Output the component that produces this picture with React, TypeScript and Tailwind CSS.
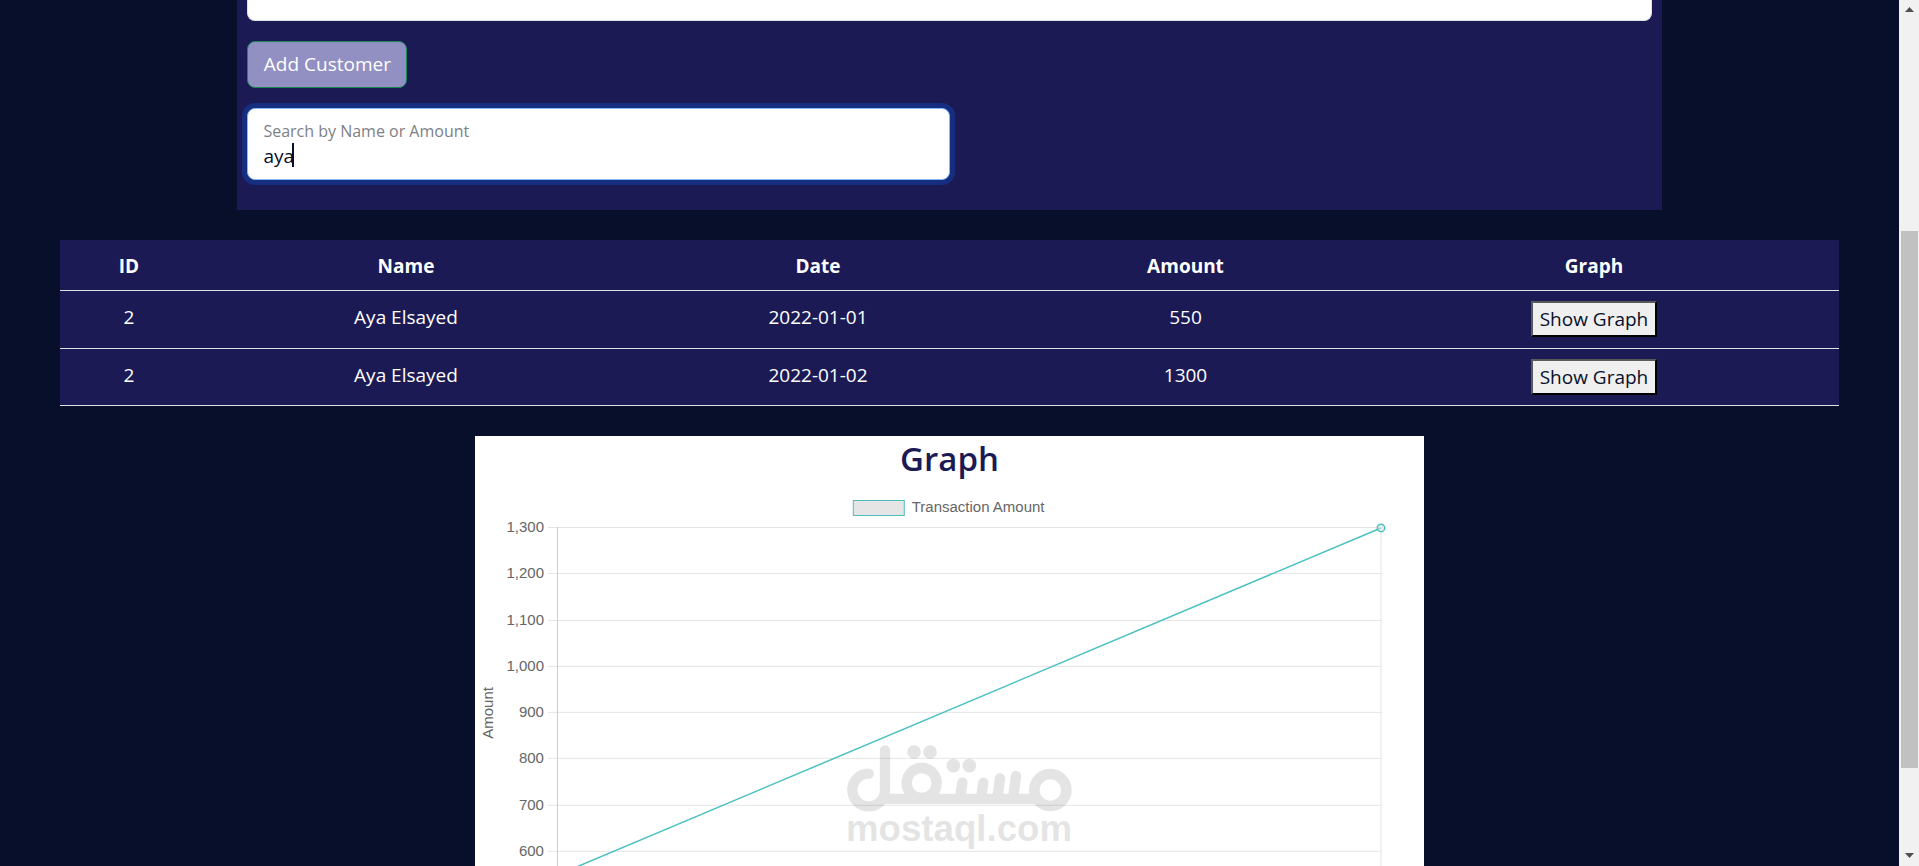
import React from 'react'

const transactions = [
  { id: 2, name: 'Aya Elsayed', date: '2022-01-01', amount: 550 },
  { id: 2, name: 'Aya Elsayed', date: '2022-01-02', amount: 1300 },
]

const ticks = ['1,300', '1,200', '1,100', '1,000', '900', '800', '700', '600']

function CustomerForm() {
  return (
    <section className="w-3/4 mx-auto px-2.5 pb-[30px] bg-[#1b1a55]">
      <input aria-label="Amount" className="block w-full h-[21px] px-4 bg-white border border-t-0 border-[#dee2e6] rounded-b-lg" />
      <button className="block mt-5 h-[47px] w-40 text-[19px] text-white bg-[#9290c3] border border-[#198754] rounded-lg">
        Add Customer
      </button>
      <div className="relative mt-5 w-1/2 h-[72px] px-[15px] pt-2 bg-white border border-[#86b7fe] rounded-lg ring-5 ring-[#162e7f]">
        <label htmlFor="search" className="block text-[16px] leading-7 text-[#7d8084]">Search by Name or Amount</label>
        <input id="search" defaultValue="aya" className="block w-full h-[22px] text-[19px] leading-[22px] text-[#070f2b] outline-none" />
        <span className="absolute left-[44px] top-[34px] w-0.5 h-6 bg-[#070f2b]" />
      </div>
    </section>
  )
}

function TransactionsTable() {
  return (
    <div className="px-[60px] mt-[30px]">
      <table className="w-full table-fixed bg-[#1b1a55] text-center text-[19px] leading-[30px] text-white">
        <colgroup>
          <col className="w-[138px]" />
          <col className="w-[416px]" />
          <col className="w-[408px]" />
          <col className="w-[327px]" />
          <col className="w-[490px]" />
        </colgroup>
        <thead>
          <tr className="border-b border-[#dee2e6]">
            <th className="px-2.5 pt-[11px] pb-[9px]">ID</th>
            <th className="px-2.5 pt-[11px] pb-[9px]">Name</th>
            <th className="px-2.5 pt-[11px] pb-[9px]">Date</th>
            <th className="px-2.5 pt-[11px] pb-[9px]">Amount</th>
            <th className="px-2.5 pt-[11px] pb-[9px]">Graph</th>
          </tr>
        </thead>
        <tbody>
          {transactions.map((item, idx) => (
            <tr key={idx} className="first:h-[58px] border-b border-[#dee2e6] align-top">
              <td className="px-2.5 pt-[11px]">{item.id}</td>
              <td className="px-2.5 pt-[11px]">{item.name}</td>
              <td className="px-2.5 pt-[11px]">{item.date}</td>
              <td className="px-2.5 pt-[11px]">{item.amount}</td>
              <td className="p-2.5">
                <button className="block mx-auto w-[126px] h-9 leading-8 text-[#070f2b] bg-[#efefef] border-2 border-t-[#5a5a5a] border-l-[#5a5a5a] border-b-black border-r-black">
                  Show Graph
                </button>
              </td>
            </tr>
          ))}
        </tbody>
      </table>
    </div>
  )
}

function GraphCard() {
  return (
    <section className="w-1/2 mx-auto mt-[30px] bg-white">
      <h2 className="h-[50px] leading-[46px] text-center text-[33px] font-semibold text-[#1b1a55]">Graph</h2>
      <svg viewBox="0 0 950 450" className="block w-full" fontFamily='"Liberation Sans", Arial, sans-serif' fontSize="15" fill="#666">
        <rect x="378.5" y="14.5" width="51" height="15" fill="#e5e5e5" stroke="#4bc0c0" />
        <text x="437" y="26">Transaction Amount</text>
        {ticks.map((tick, idx) => (
          <g key={tick}>
            <line x1="73" x2="907" y1={41.5 + Math.round(idx * 46.25)} y2={41.5 + Math.round(idx * 46.25)} stroke="#e5e5e5" />
            <text x="69" y={46 + Math.round(idx * 46.25)} textAnchor="end">{tick}</text>
          </g>
        ))}
        <line x1="82.5" x2="82.5" y1="41" y2="421" stroke="#cccccc" />
        <line x1="906.5" x2="906.5" y1="41" y2="421" stroke="#e5e5e5" />
        <text transform="translate(18 227) rotate(-90)" textAnchor="middle">Amount</text>
        <line x1="83" y1="389" x2="906.5" y2="42" stroke="#4bc0c0" strokeWidth="1.5" />
        <circle cx="906.5" cy="42" r="3.7" fill="#e5e5e5" fillOpacity="0.6" stroke="#4bc0c0" strokeWidth="1.5" />
      </svg>
    </section>
  )
}

function Watermark() {
  return (
    <div className="absolute inset-x-0 bottom-0 flex justify-center pointer-events-none">
      <svg viewBox="-3 0 843 408" className="w-[281px] h-[136px] opacity-10" fill="none" stroke="#000" strokeWidth="31" strokeLinecap="round">
        <path d="M146 131A49 49 0 1 0 195 180V61" />
        <path d="M195 206.500H650" strokeLinecap="butt" />
        <circle cx="305" cy="159" r="45" />
        <path d="M427 158L421 198M490 158L484 198M540 145L533 198M588 138L580 198" />
        <circle cx="691" cy="180" r="48" strokeWidth="32" />
        <g fill="#000" stroke="none">
          <circle cx="282" cy="66" r="20.500" />
          <circle cx="330" cy="66" r="20.500" />
          <circle cx="400" cy="107" r="20.500" />
          <circle cx="448" cy="107" r="20.500" />
        </g>
        <text x="417" y="332" textAnchor="middle" fontFamily='"Liberation Sans", Arial, sans-serif' fontWeight="700" fontSize="110" fill="#000" stroke="none">
          mostaql.com
        </text>
      </svg>
    </div>
  )
}

function Scrollbar() {
  return (
    <div className="w-5 shrink-0 flex flex-col items-center bg-[#f1f1f1]">
      <svg viewBox="0 0 20 20" className="w-5 h-5" fill="#505050">
        <path d="M6 12L10.500 7L15 12Z" />
      </svg>
      <div className="flex-[211]" />
      <div className="flex-[537] w-[17px] bg-[#c1c1c1]" />
      <div className="flex-[78]" />
      <svg viewBox="0 0 20 20" className="w-5 h-5" fill="#505050">
        <path d="M6 7L10.500 12L15 7Z" />
      </svg>
    </div>
  )
}

export default function App() {
  return (
    <div className="relative flex h-screen overflow-hidden bg-[#070f2b] font-['Open_Sans','Noto_Sans',sans-serif]">
      <main className="flex-1 min-w-0">
        <CustomerForm />
        <TransactionsTable />
        <GraphCard />
      </main>
      <Scrollbar />
      <Watermark />
    </div>
  )
}
